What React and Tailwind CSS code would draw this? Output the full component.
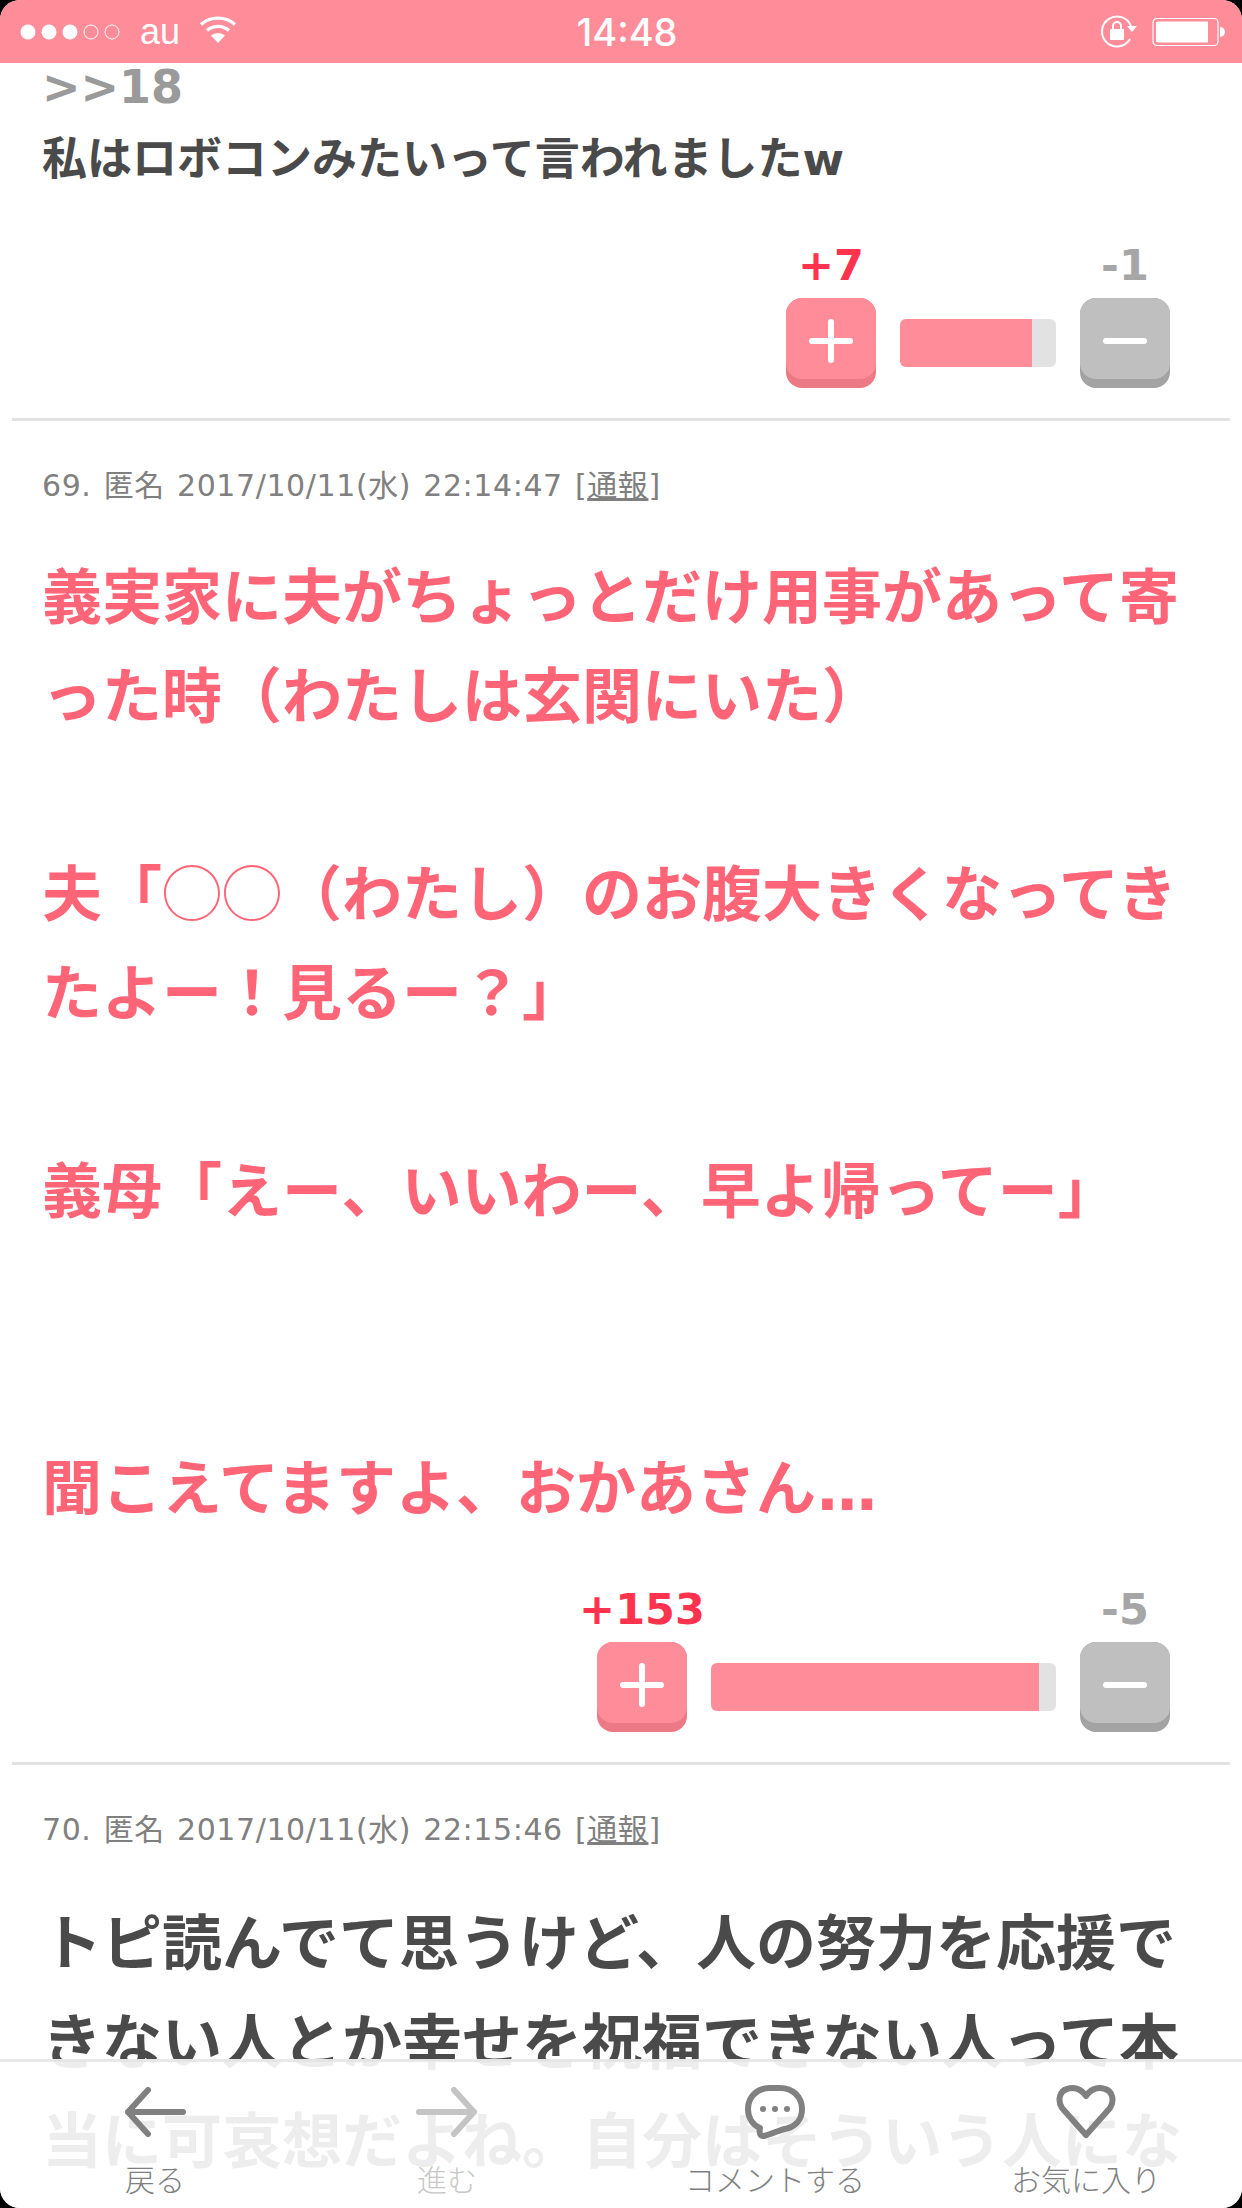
const JP = '"Noto Sans CJK JP", sans-serif';

function StatusBar() {
  return (
    <div className="relative z-10 grid h-[63px] grid-cols-[1fr_auto_1fr] items-center bg-[#ff8c99] text-white">
      <div className="flex items-center pl-[20px]">
        <svg width="108" height="18" viewBox="0 0 108 18">
          <circle cx="8" cy="9" r="7.5" fill="#fff" />
          <circle cx="29" cy="9" r="7.5" fill="#fff" />
          <circle cx="50" cy="9" r="7.5" fill="#fff" />
          <circle cx="71" cy="9" r="7" fill="none" stroke="#fff" strokeWidth="1" />
          <circle cx="92" cy="9" r="7" fill="none" stroke="#fff" strokeWidth="1" />
        </svg>
        <span className="ml-[12px] text-[36px] leading-[44px] font-['Liberation_Sans'] font-light">au</span>
        <svg className="ml-[19px] mb-[6px]" width="38" height="28" viewBox="0 0 38 28" fill="none">
          <path d="M2 9.5C11 1 27 1 36 9.5" stroke="#fff" strokeWidth="3.4" />
          <path d="M8 15.5C14 10 24 10 30 15.5" stroke="#fff" strokeWidth="3.4" />
          <path d="M12 20.5C16.5 17 21.5 17 26 20.5L19 28Z" fill="#fff" />
        </svg>
      </div>
      <div className="ml-[12px] text-[38px] leading-[44px] font-['Inter'] font-medium">14:48</div>
      <div className="flex items-center justify-end pr-[16px]">
        <svg width="38" height="34" viewBox="0 0 38 34" fill="none">
          <path d="M30 24A15 15 0 1 1 31 11" stroke="#fff" strokeWidth="2" />
          <path d="M27 11H37L32 17Z" fill="#fff" />
          <rect x="10" y="14" width="14" height="11" rx="1" fill="#fff" />
          <path d="M13 14V11A4 4 0 0 1 21 11V14" stroke="#fff" strokeWidth="2" />
        </svg>
        <svg className="ml-[14px]" width="74" height="30" viewBox="0 0 74 30" fill="none">
          <rect x="1" y="1.5" width="65" height="27" rx="4" stroke="#fff" strokeWidth="1.2" />
          <path d="M4 6.5A2 2 0 0 1 6 4.500H56V25.500H6A2 2 0 0 1 4 23.500Z" fill="#fff" />
          <path d="M68 10A5 5 0 0 1 68 20Z" fill="#fff" />
        </svg>
      </div>
    </div>
  );
}

function VoteButton({ label, labelColor, top, bottom, minus }) {
  return (
    <div className="flex w-[90px] flex-col items-center">
      <div
        className={`h-[46px] text-[43px] leading-[46px] font-bold whitespace-nowrap font-['DejaVu_Sans'] ${labelColor}`}
      >
        {label}
      </div>
      <div className={`mt-[10px] h-[90px] w-[90px] rounded-[16px] ${bottom}`}>
        <div className={`flex h-[81px] w-[90px] items-center justify-center rounded-[16px] ${top}`}>
          <svg className="mt-[4px]" width="44" height="44" viewBox="0 0 44 44">
            <rect x="0" y="19" width="44" height="6" rx="3" fill="#fff" />
            {!minus && <rect x="19" y="0" width="6" height="44" rx="3" fill="#fff" />}
          </svg>
        </div>
      </div>
    </div>
  );
}

function Votes({ plus, minus, barWidth, fill }) {
  return (
    <div className="flex justify-end pr-[72px]">
      <VoteButton label={plus} labelColor="text-[#ff334d]" top="bg-[#ff8c99]" bottom="bg-[#ec7a86]" />
      <div className="mx-[24px] mt-[77px] h-[48px] overflow-hidden rounded-[6px] bg-[#e2e2e2]" style={{ width: barWidth }}>
        <div className="h-full bg-[#ff8c99]" style={{ width: fill }} />
      </div>
      <VoteButton label={minus} labelColor="text-[#a6a6a6]" top="bg-[#bfbfbf]" bottom="bg-[#a3a3a3]" minus />
    </div>
  );
}

function Divider() {
  return <div className="mx-[12px] mt-[30px] h-[3px] bg-[#e2e2e2]" />;
}

function Meta({ children }) {
  return (
    <div className="mt-[43px] h-[44px] pl-[42px] text-[30px] leading-[44px] tracking-[0.6px] [word-spacing:2px] text-[#808080] font-['DejaVu_Sans','Noto_Sans_CJK_JP',sans-serif]">
      {children} [<span className="underline">通報</span>]
    </div>
  );
}

function Body({ color, lines, className }) {
  return (
    <div
      className={`pl-[42px] text-[60px] font-bold whitespace-nowrap font-['DejaVu_Sans','Noto_Sans_CJK_JP',sans-serif] ${color} ${className}`}
    >
      {lines.map((line, i) => (
        <div key={i} className="h-[99px] leading-[99px]">
          {line}
        </div>
      ))}
    </div>
  );
}

function Tab({ width, label, color, children }) {
  return (
    <div className={`flex shrink-0 flex-col items-center ${width}`}>
      <div className="flex h-[60px] w-[70px] items-center justify-center">{children}</div>
      <div className={`mt-[16px] text-[30px] leading-[40px] font-light whitespace-nowrap ${color}`} style={{ fontFamily: JP }}>
        {label}
      </div>
    </div>
  );
}

function BottomBar() {
  const g = '#808080';
  return (
    <div className="absolute inset-x-0 bottom-0 h-[149px] border-t-[3px] border-[#e2e2e2]/80 bg-white/90">
      <div className="flex pt-[20px]">
        <Tab width="w-[310px]" label="戻る" color="text-[#808080]">
          <svg width="62" height="50" viewBox="0 0 62 50" fill="none" stroke={g} strokeWidth="6" strokeLinecap="round" strokeLinejoin="round">
            <path d="M59 25H4M24 3L4 25L24 47" />
          </svg>
        </Tab>
        <Tab width="w-[274px]" label="進む" color="text-[#c8c8c8]">
          <svg width="62" height="50" viewBox="0 0 62 50" fill="none" stroke="#c4c4c4" strokeWidth="6" strokeLinecap="round" strokeLinejoin="round">
            <path d="M3 25H58M38 3L58 25L38 47" />
          </svg>
        </Tab>
        <Tab width="w-[382px]" label="コメントする" color="text-[#808080]">
          <svg width="60" height="54" viewBox="0 0 60 54" fill="none">
            <path
              d="M25 3H35C48 3 57 12 57 24C57 34 51 41 42 43.500C37 44 27 49 19 51C15 51.500 14 48 15 43C8 40 3 33 3 24C3 12 12 3 25 3Z"
              stroke={g}
              strokeWidth="6"
              strokeLinejoin="round"
            />
            <circle cx="18" cy="24" r="3" fill={g} />
            <circle cx="30" cy="24" r="3" fill={g} />
            <circle cx="42" cy="24" r="3" fill={g} />
          </svg>
        </Tab>
        <Tab width="w-[240px]" label="お気に入り" color="text-[#808080]">
          <svg width="60" height="54" viewBox="0 0 60 54" fill="none">
            <path
              d="M30 50L6 23C1 15 4 6 11 4C18 1.500 25 4 30 11C35 4 42 1.500 49 4C56 6 59 15 54 23Z"
              stroke={g}
              strokeWidth="6"
              strokeLinejoin="round"
            />
          </svg>
        </Tab>
      </div>
    </div>
  );
}

function Circles() {
  return <span className="leading-[0] font-['Noto_Sans_CJK_JP'] font-normal">◯◯</span>;
}

export default function App() {
  const pink = 'text-[#ff6577]';
  const dark = 'text-[#4a4a4a]';
  return (
    <div className="h-[2208px] w-[1242px] overflow-hidden bg-black">
      <div className="relative h-[2208px] overflow-hidden rounded-[20px] bg-white">
        <StatusBar />
        <div className="-mt-[6px]">
          <div className="h-[60px] pl-[42px] text-[46px] leading-[60px] font-bold text-[#9a9a9a] font-['DejaVu_Sans']">
            &gt;&gt;18
          </div>
          <div
            className={`mt-[13px] h-[60px] pl-[42px] text-[45px] leading-[60px] font-bold font-['DejaVu_Sans','Noto_Sans_CJK_JP',sans-serif] ${dark}`}
          >
            私はロボコンみたいって言われましたw
          </div>
          <div className="mt-[52px]">
            <Votes plus="+7" minus="-1" barWidth={156} fill={132} />
          </div>
          <Divider />

          <Meta>69. 匿名 2017/10/11(水) 22:14:47</Meta>
          <Body
            color={pink}
            className="mt-[41px]"
            lines={[
              '義実家に夫がちょっとだけ用事があって寄',
              'った時（わたしは玄関にいた）',
              '',
              <>
                夫「<Circles />（わたし）のお腹大きくなってき
              </>,
              'たよー！見るー？」',
              '',
              '義母「えー、いいわー、早よ帰ってー」',
              '',
              '',
              <>
                聞こえてますよ、おかあさん<span className="tracking-[-3px]">...</span>
              </>,
            ]}
          />
          <div className="mt-[47px]">
            <Votes plus="+153" minus="-5" barWidth={345} fill={328} />
          </div>
          <Divider />

          <Meta>70. 匿名 2017/10/11(水) 22:15:46</Meta>
          <Body
            color={dark}
            className="mt-[43px]"
            lines={[
              'トピ読んでて思うけど、人の努力を応援で',
              'きない人とか幸せを祝福できない人って本',
              '当に可哀想だよね。自分はそういう人にな',
            ]}
          />
        </div>
        <BottomBar />
      </div>
    </div>
  );
}
